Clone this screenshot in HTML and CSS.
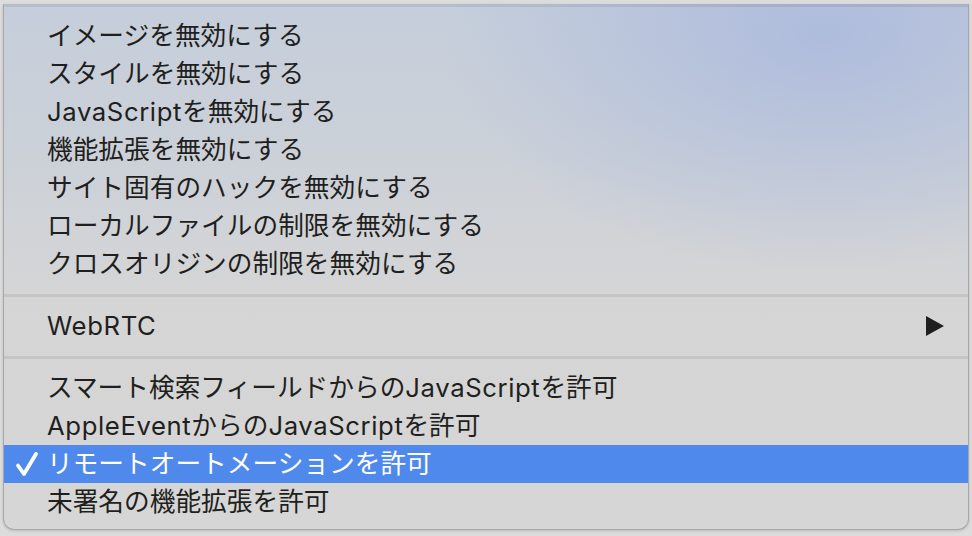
FILE: index.html
```html
<!DOCTYPE html>
<html lang="ja">
<head>
  <meta charset="UTF-8" />
  <meta name="viewport" content="width=device-width, initial-scale=1.0" />
  <title>開発メニュー</title>
  <link rel="stylesheet" href="styles.css">
</head>
<body>
  <div class="menu">
    <div class="separator"></div>
    <div class="menu-item">イメージを無効にする</div>
    <div class="menu-item">スタイルを無効にする</div>
    <div class="menu-item"><span class="latin">JavaScript</span>を無効にする</div>
    <div class="menu-item">機能拡張を無効にする</div>
    <div class="menu-item">サイト固有のハックを無効にする</div>
    <div class="menu-item">ローカルファイルの制限を無効にする</div>
    <div class="menu-item">クロスオリジンの制限を無効にする</div>
    <div class="separator"></div>
    <div class="menu-item submenu">
      <span class="latin">WebRTC</span>
      <svg class="arrow" width="18" height="20" viewBox="0 0 18 20"><path d="M0 0 L18 10 L0 20 Z" fill="currentColor"/></svg>
    </div>
    <div class="separator"></div>
    <div class="menu-item">スマート検索フィールドからの<span class="latin">JavaScript</span>を許可</div>
    <div class="menu-item"><span class="latin">AppleEvent</span>からの<span class="latin">JavaScript</span>を許可</div>
    <div class="menu-item checked selected">
      <svg class="check" width="24" height="26" viewBox="0 0 24 26"><path d="M3 14.5 L9 23 L21 3" fill="none" stroke="currentColor" stroke-width="3.8" stroke-linecap="round" stroke-linejoin="round"/></svg>
      リモートオートメーションを許可
    </div>
    <div class="menu-item">未署名の機能拡張を許可</div>
  </div>
</body>
</html>
```

FILE: styles.css
```css
body {
  margin: 0;
  padding: 0 3px 0 3px;
  background-color: #dcdcdc;
  font-family: "Inter", "Noto Sans CJK JP", sans-serif;
  overflow: hidden;
  height: 536px;
}
.menu {
  margin-top: -7px;
  border: 1px solid #a7a7a9;
  border-top: none;
  border-radius: 0 0 11px 11px;
  padding-bottom: 8px;
  background:
    radial-gradient(ellipse 380px 240px at 820px 30px, rgba(164, 180, 222, 0.7), rgba(164, 180, 222, 0) 100%),
    linear-gradient(180deg, #c5cedb 0%, #ccd1d8 30%, #d5d5d6 55%, #d6d6d6 100%);
  box-shadow: 0 1px 3px rgba(0, 0, 0, 0.15);
}
.separator {
  height: 3px;
  margin: 11px 0 10px;
  background-color: rgba(0, 0, 0, 0.075);
}
.menu-item {
  position: relative;
  height: 38px;
  line-height: 38px;
  padding-left: 43px;
  padding-right: 24px;
  font-size: 25.7px;
  color: #1f1f20;
  white-space: nowrap;
}
.latin {
  letter-spacing: 0.6px;
}
.submenu {
  display: flex;
  justify-content: space-between;
  align-items: center;
}
.arrow {
  color: #1f1f20;
}
.selected {
  background-color: #5089ec;
  color: #ffffff;
}
.check {
  position: absolute;
  left: 11px;
  top: 6px;
  color: #ffffff;
}
```
